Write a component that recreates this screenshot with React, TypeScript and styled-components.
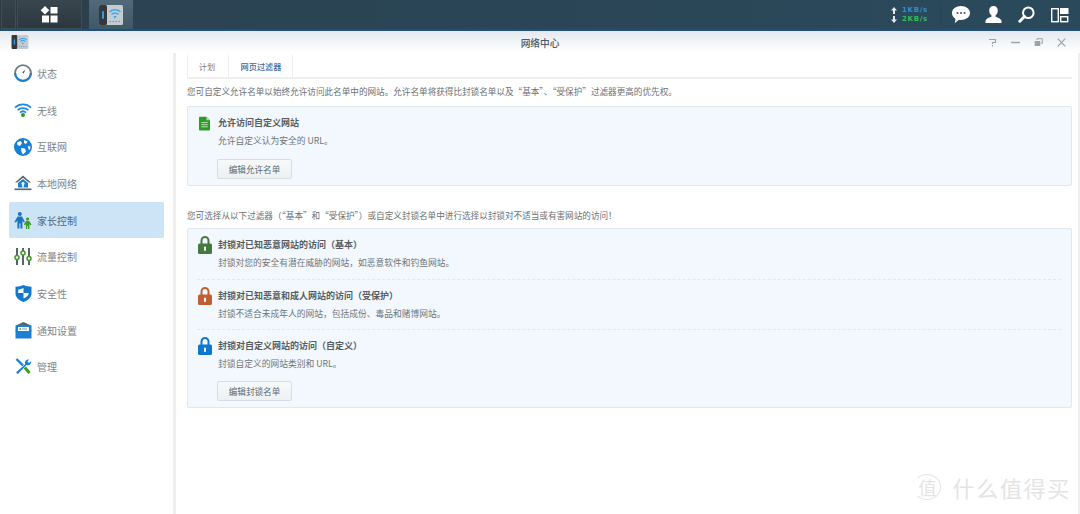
import React from 'react';
import styled, { createGlobalStyle } from 'styled-components';

const Global = createGlobalStyle`
  html, body {
    margin: 0;
    height: 100%;
    overflow: hidden;
    background: #fff;
    font-family: "Noto Sans CJK SC", "Noto Sans", sans-serif;
  }
  * { box-sizing: border-box; }
`;

const Page = styled.div`
  position: relative;
  width: 1080px;
  height: 514px;
  display: flex;
  flex-direction: column;
  overflow: hidden;
`;

const Taskbar = styled.header`
  height: 31px;
  flex: none;
  display: flex;
  align-items: stretch;
  padding-left: 1px;
  background: linear-gradient(90deg, #2c3941 0%, #2b4352 12%, #2a4a5c 100%);
  border-bottom: 2px solid #1f4f7d;
`;

const MainMenu = styled.div`
  width: 15px;
  border: 1px solid #3f4d55;
  border-top: 0;
  background: linear-gradient(180deg, #36434b, #2c3940);
`;

const HomeButton = styled.div`
  width: 65px;
  margin-right: 7px;
  margin-left: 1px;
  padding-right: 2px;
  display: flex;
  align-items: center;
  justify-content: center;
  background: linear-gradient(180deg, #39464e, #2b383f);
  border: 1px solid #3f4d55;
  border-top: 0;
`;

const AppButton = styled.div`
  width: 44px;
  display: flex;
  align-items: center;
  justify-content: center;
  background: linear-gradient(180deg, #51697a, #3f5866);
`;

const Spacer = styled.div`
  flex: 1;
`;

const Rates = styled.div`
  width: 50px;
  margin: 4px 8px 4px 0;
  display: flex;
  flex-direction: column;
  justify-content: center;
  border-right: 1px solid #2b4252;
`;

const Rate = styled.div<{ $color: string }>`
  display: flex;
  align-items: center;
  gap: 5px;
  height: 9px;
  font: bold 7px/9px "DejaVu Sans", sans-serif;
  letter-spacing: 0.7px;
  color: ${p => p.$color};
`;

const TrayGroup = styled.div`
  display: flex;
  align-items: center;
  gap: 10px;
  margin-right: 9px;
`;

const TrayIcon = styled.span`
  width: 23px;
  height: 20px;
  display: flex;
  align-items: center;
  justify-content: center;
`;

const TitleBar = styled.div`
  position: relative;
  flex: none;
  height: 22px;
  display: flex;
  align-items: center;
  justify-content: space-between;
  padding: 0 14px 0 11px;
  background: linear-gradient(180deg, #e4e9ee 0%, #f9fafb 75%, #fff 100%);
`;

const Title = styled.div`
  position: absolute;
  left: 0;
  right: 0;
  top: 3px;
  text-align: center;
  font-size: 9.7px;
  line-height: 18px;
  font-weight: 500;
  color: #4a5a6a;
`;

const WindowButtons = styled.div`
  display: flex;
  align-items: center;
  gap: 14px;
`;

const Body = styled.div`
  flex: 1;
  display: flex;
  min-height: 0;
`;

const Sidebar = styled.nav`
  width: 176px;
  flex: none;
  padding: 2px 0 0 9px;
  border-right: 3px solid #eeeeee;
`;

const NavItem = styled.div<{ $active?: boolean }>`
  width: 155px;
  height: 36.7px;
  display: flex;
  align-items: center;
  gap: 5px;
  padding-left: 5px;
  border-radius: 2px;
  font-size: 10px;
  color: ${p => (p.$active ? '#51667c' : '#7e8489')};
  background: ${p => (p.$active ? '#cde3f6' : 'transparent')};
`;

const NavIcon = styled.span`
  width: 18px;
  height: 18px;
  flex: none;
  display: flex;
  align-items: center;
  justify-content: center;
`;

const Content = styled.main`
  flex: 1;
  min-width: 0;
  padding: 2px 6px 0 11px;
  border-right: 2px solid #f0f0f0;
`;

const Tabs = styled.div`
  display: flex;
  height: 24px;
  border-bottom: 2px solid #eeeeee;
`;

const Tab = styled.div<{ $active?: boolean }>`
  height: 22px;
  width: ${p => (p.$active ? '64px' : '41px')};
  display: flex;
  align-items: center;
  justify-content: center;
  padding-left: ${p => (p.$active ? '1px' : '0')};
  padding-right: ${p => (p.$active ? '0' : '2px')};
  font-size: 8.2px;
  color: ${p => (p.$active ? '#3f6a9c' : '#7d8286')};
  font-weight: ${p => (p.$active ? 500 : 400)};
  border-left: 1px solid #eeeeee;
  &:last-child {
    border-right: 1px solid #eeeeee;
    width: 65px;
  }
`;

const Intro = styled.p<{ $top: number }>`
  margin: ${p => p.$top}px 0 0;
  height: 14px;
  font-size: 8.6px;
  line-height: 14px;
  color: #6b7074;
  white-space: nowrap;
`;

const Card = styled.section<{ $top: number }>`
  margin-top: ${p => p.$top}px;
  padding: 0 10px 6px 9px;
  background: #f2f8fd;
  border: 1px solid #dfe8f0;
  border-radius: 2px;
`;

const Row = styled.div<{ $divider?: boolean }>`
  display: flex;
  gap: 6px;
  padding-top: 9px;
  height: 50px;
  border-top: ${p => (p.$divider ? '1px dashed #e2e8ee' : '0')};
`;

const RowIcon = styled.span`
  width: 15px;
  height: 18px;
  margin-top: -2px;
  flex: none;
  display: flex;
  align-items: center;
  justify-content: center;
`;

const RowText = styled.div`
  display: flex;
  flex-direction: column;
  gap: 4px;
`;

const RowTitle = styled.div`
  font-size: 9px;
  line-height: 14px;
  font-weight: 700;
  color: #565c61;
  white-space: nowrap;
`;

const RowDesc = styled.div`
  font-size: 8.75px;
  line-height: 14px;
  color: #6f767b;
  white-space: nowrap;
`;

const Button = styled.div`
  width: 75px;
  height: 20px;
  margin: 2px 0 0 20px;
  display: flex;
  align-items: center;
  justify-content: center;
  font-size: 8.6px;
  color: #5d6a72;
  background: linear-gradient(180deg, #f7f9fa, #eef1f3);
  border: 1px solid #d8dde1;
  border-radius: 2px;
`;

const Watermark = styled.div`
  position: absolute;
  right: 9px;
  bottom: 13px;
  display: flex;
  align-items: center;
  gap: 11px;
  color: #e4e4e4;
  font-size: 22px;
  line-height: 28px;
  letter-spacing: 1.7px;
`;

const WatermarkBadge = styled.span`
  width: 28px;
  height: 26px;
  display: flex;
  align-items: center;
  justify-content: center;
  font-size: 18px;
  letter-spacing: 0;
  border: 1.5px solid #e4e4e4;
  border-left-color: transparent;
  border-radius: 50%;
`;

const AppGlyph: React.FC<{ w: number; h: number }> = ({ w, h }) => (
  <svg width={w} height={h} viewBox="0 0 24 20">
    <rect x="0" y="0" width="24" height="20" rx="1.5" fill="#c3ccd1" />
    <rect x="0" y="0" width="8" height="20" rx="1.5" fill="#33393d" />
    <rect x="3" y="6" width="2" height="8" rx="1" fill="#2f9bf0" />
    <path d="M10.500 7a8 8 0 0 1 11 0M12.500 9.500a5 5 0 0 1 7 0" fill="none" stroke="#3ea6ee" strokeWidth="1.6" />
    <path d="M14.300 11.500a2.500 2.500 0 0 1 3.400 0L16 13.500z" fill="#3ea6ee" />
    <path d="M10.500 16.500h1.600M13.500 16.500h1.600M16.500 16.500h1.600M19.500 16.500h1.600" stroke="#5a9cc8" strokeWidth="1.2" />
  </svg>
);

const GaugeIcon = () => (
  <svg width="18" height="18" viewBox="0 0 18 18">
    <circle cx="9" cy="9" r="7.9" fill="#fff" stroke="#6e7c86" strokeWidth="1.8" />
    <path d="M1.100 9a7.900 7.900 0 0 0 15.800 0" fill="none" stroke="#1a80d4" strokeWidth="2.200" />
    <path d="M11.500 5.500 8.200 8.200 9.600 9.800z" fill="#56626b" />
  </svg>
);

const WifiIcon = () => (
  <svg width="18" height="14" viewBox="0 0 18 14">
    <path d="M1 4.600a11.500 11.500 0 0 1 16 0M3.600 7.200a8 8 0 0 1 10.800 0M6 9.600a4.500 4.500 0 0 1 6 0" fill="none" stroke="#1f8adc" strokeWidth="1.7" />
    <circle cx="9" cy="12" r="2" fill="#2f9a1d" />
  </svg>
);

const GlobeIcon = () => (
  <svg width="18" height="18" viewBox="0 0 18 18">
    <circle cx="9" cy="9" r="9" fill="#1480d6" />
    <path d="M3 4.500 6.500 3 8 5 6 8 3.500 7zM10 2l3.500 1.500L12 6l-2-1zM7 10l4 .5 1 3-3 3-1.500-2.500zM14 8l2.500.5-.6 3.500-1.600-1z" fill="#fff" />
  </svg>
);

const HouseIcon = () => (
  <svg width="18" height="17" viewBox="0 0 18 17">
    <path d="M9 .5 17 7.500h-2.200L9 2.800 3.200 7.500H1z" fill="#56646f" />
    <path d="M9 4 14 8v4.500H4V8z" fill="#1a80d4" />
    <circle cx="9" cy="8.500" r="1.600" fill="#fff" />
    <rect x="8.200" y="10" width="1.600" height="2.500" fill="#fff" />
    <rect x="0.500" y="13.500" width="17" height="1.600" fill="#56646f" />
  </svg>
);

const FamilyIcon = () => (
  <svg width="18" height="17" viewBox="0 0 18 17">
    <circle cx="5.800" cy="2" r="2" fill="#1a74c4" />
    <path d="M3.600 4.500h4.400L11 10 9.600 10.600 8.400 8.400v8H6.400v-5h-1v5H3.400V8.400L2 10.600.4 10z" fill="#1a74c4" />
    <circle cx="13.600" cy="7" r="1.600" fill="#3d9b24" />
    <path d="M12 9h3.200l2.300 3.600-1.200.6-.9-1.300V17H14v-3h-.8v3h-1.300v-5.100l-.9 1.300-1.200-.6z" fill="#3d9b24" />
  </svg>
);

const SlidersIcon = () => (
  <svg width="18" height="17" viewBox="0 0 18 17">
    <path d="M3 0v17M9 0v17M15 0v17" stroke="#56646f" strokeWidth="2" />
    <circle cx="3" cy="9.500" r="2" fill="#fff" stroke="#3d9b24" strokeWidth="1.500" />
    <circle cx="9" cy="5" r="2" fill="#fff" stroke="#3d9b24" strokeWidth="1.500" />
    <circle cx="15" cy="10.500" r="2" fill="#fff" stroke="#3d9b24" strokeWidth="1.500" />
  </svg>
);

const ShieldIcon = () => (
  <svg width="17" height="17" viewBox="0 0 17 17">
    <path d="M8.500 0c2.500 1.300 5 1.700 8 1.700v6.500c0 4-3 7-8 8.800-5-1.800-8-4.800-8-8.800V1.700c3 0 5.500-.4 8-1.700z" fill="#1278d0" />
    <path d="M8.500 3v5H3.200V4.400c2 0 3.600-.5 5.300-1.400zM8.500 8h5.300c-.2 2.600-2.300 4.200-5.300 5.500z" fill="#fff" />
  </svg>
);

const MailboxIcon = () => (
  <svg width="17" height="17" viewBox="0 0 17 17">
    <path d="M8.500 0 15 3H2z" fill="#56646f" />
    <rect x="0.500" y="3" width="16" height="6.500" rx="1" fill="#1a80d4" />
    <rect x="0.500" y="8" width="16" height="8.500" rx="0.500" fill="#1a80d4" />
    <rect x="3" y="5" width="11" height="4" fill="#fff" />
    <path d="M4.500 7h1.500" stroke="#3d9b24" strokeWidth="1.600" />
    <path d="M7 7h5" stroke="#7f99ac" strokeWidth="1" />
  </svg>
);

const ToolsIcon = () => (
  <svg width="17" height="17" viewBox="0 0 17 17">
    <path d="M1.500 1 8 7.500" stroke="#1a80d4" strokeWidth="2.400" />
    <path d="M14 1.500a3.400 3.400 0 0 0-3.800 4.800L1 14.500 2.800 16l8.800-9a3.400 3.400 0 0 0 4.600-3.800L14 5l-1.500-1.500z" fill="#1a80d4" />
    <path d="M9.800 9.500 14.500 15" stroke="#3d9b24" strokeWidth="3" />
  </svg>
);

const DocIcon = () => (
  <svg width="11" height="15" viewBox="0 0 12 15">
    <path d="M1 0h7l4 4v10a1 1 0 0 1-1 1H1a1 1 0 0 1-1-1V1a1 1 0 0 1 1-1z" fill="#2f9a2a" />
    <path d="M8 0l4 4H8z" fill="#a6d79e" />
    <path d="M2.500 6.500h7M2.500 8.800h7M2.500 11.100h7" stroke="#c9e8c4" strokeWidth="1" />
  </svg>
);

const LockIcon: React.FC<{ color: string }> = ({ color }) => (
  <svg width="14" height="18" viewBox="0 0 14 18">
    <path d="M3.500 8V4.500a3.500 3.500 0 0 1 7 0V8" fill="none" stroke={color} strokeWidth="2" />
    <rect x="0" y="7.500" width="14" height="10.500" rx="1.500" fill={color} />
    <rect x="6" y="10.500" width="2" height="4.500" rx="1" fill="#fff" />
  </svg>
);

const navItems: { label: string; icon: React.ReactNode; active?: boolean }[] = [
  { label: '状态', icon: <GaugeIcon /> },
  { label: '无线', icon: <WifiIcon /> },
  { label: '互联网', icon: <GlobeIcon /> },
  { label: '本地网络', icon: <HouseIcon /> },
  { label: '家长控制', icon: <FamilyIcon />, active: true },
  { label: '流量控制', icon: <SlidersIcon /> },
  { label: '安全性', icon: <ShieldIcon /> },
  { label: '通知设置', icon: <MailboxIcon /> },
  { label: '管理', icon: <ToolsIcon /> },
];

const App: React.FC = () => (
  <Page>
    <Global />
    <Taskbar>
      <MainMenu />
      <HomeButton>
        <svg width="18" height="17" viewBox="0 0 18 17">
          <path d="M5 0l4.300 4.200L5 8.400.7 4.200z" fill="#fff" />
          <rect x="10.500" y="1" width="7" height="6.500" fill="#fff" />
          <rect x="2" y="9.500" width="7" height="7" fill="#fff" />
          <rect x="10.500" y="9.500" width="7" height="7" fill="#fff" />
        </svg>
      </HomeButton>
      <AppButton>
        <AppGlyph w={24} h={20} />
      </AppButton>
      <Spacer />
      <Rates>
        <Rate $color="#2f8fd0">
          <svg width="6" height="7" viewBox="0 0 6 7"><path d="M3 0l3 3.500H4V7H2V3.500H0z" fill="#e4e8ea" /></svg>
          1KB/s
        </Rate>
        <Rate $color="#2fbf58">
          <svg width="6" height="7" viewBox="0 0 6 7"><path d="M3 7 0 3.500h2V0h2v3.500h2z" fill="#e4e8ea" /></svg>
          2KB/s
        </Rate>
      </Rates>
      <TrayGroup>
        <TrayIcon>
          <svg width="18" height="17" viewBox="0 0 18 17">
            <path d="M9 0c5 0 9 3 9 7s-4 7-9 7c-.8 0-1.500 0-2.200-.2C5.500 15 4 16.500 2.500 17c.7-1.200 1-2.800.8-4.300C1.200 11.400 0 9.300 0 7c0-4 4-7 9-7z" fill="#fff" />
            <circle cx="5.500" cy="7" r="1.100" fill="#4a6070" />
            <circle cx="9" cy="7" r="1.100" fill="#4a6070" />
            <circle cx="12.500" cy="7" r="1.100" fill="#4a6070" />
          </svg>
        </TrayIcon>
        <TrayIcon>
          <svg width="17" height="17" viewBox="0 0 17 17">
            <path d="M8.500 0c2.700 0 4.300 2 4.300 4.700 0 2-1 3.700-2.300 4.700v1.300c2.500.8 5.500 1.800 6 4.300v2H.5v-2c.5-2.500 3.500-3.500 6-4.300V9.400C5.200 8.400 4.200 6.700 4.200 4.700 4.200 2 5.800 0 8.500 0z" fill="#fff" />
          </svg>
        </TrayIcon>
        <TrayIcon>
          <svg width="17" height="17" viewBox="0 0 17 17">
            <circle cx="10.300" cy="6.700" r="5.300" fill="none" stroke="#fff" strokeWidth="2" />
            <path d="M6.500 10.500 1.800 15.200" stroke="#fff" strokeWidth="3" strokeLinecap="round" />
          </svg>
        </TrayIcon>
        <TrayIcon>
          <svg width="18" height="16" viewBox="0 0 18 16">
            <rect x="0.700" y="1.700" width="6.600" height="13" fill="none" stroke="#fff" strokeWidth="1.400" />
            <rect x="9" y="1" width="8.500" height="6" fill="#fff" />
            <rect x="9.700" y="9.700" width="7" height="5" fill="none" stroke="#fff" strokeWidth="1.400" />
          </svg>
        </TrayIcon>
      </TrayGroup>
    </Taskbar>
    <TitleBar>
      <AppGlyph w={18} h={14} />
      <Title>网络中心</Title>
      <WindowButtons>
        <svg width="9" height="9" viewBox="0 0 9 9">
          <path d="M1 1.500h6.500v3H4.500v1.500M4.500 7v1.500" fill="none" stroke="#9aa3aa" strokeWidth="1.200" />
        </svg>
        <svg width="9" height="9" viewBox="0 0 9 9"><path d="M0 4.500h9" stroke="#9aa3aa" strokeWidth="1.400" /></svg>
        <svg width="9" height="9" viewBox="0 0 9 9">
          <path d="M3 2V.7h5.300v4.600H7" fill="none" stroke="#9aa3aa" strokeWidth="1" />
          <rect x="0.700" y="3" width="5.600" height="5" fill="#9aa3aa" />
        </svg>
        <svg width="9" height="9" viewBox="0 0 9 9"><path d="M.7.700l7.600 7.600M8.300.700.7 8.300" stroke="#9aa3aa" strokeWidth="1.200" /></svg>
      </WindowButtons>
    </TitleBar>
    <Body>
      <Sidebar>
        {navItems.map(item => (
          <NavItem key={item.label} $active={item.active}>
            <NavIcon>{item.icon}</NavIcon>
            {item.label}
          </NavItem>
        ))}
      </Sidebar>
      <Content>
        <Tabs>
          <Tab>计划</Tab>
          <Tab $active>网页过滤器</Tab>
        </Tabs>
        <Intro $top={5}>您可自定义允许名单以始终允许访问此名单中的网站。允许名单将获得比封锁名单以及“基本”、“受保护”过滤器更高的优先权。</Intro>
        <Card $top={8}>
          <Row>
            <RowIcon><DocIcon /></RowIcon>
            <RowText>
              <RowTitle>允许访问自定义网站</RowTitle>
              <RowDesc>允许自定义认为安全的 URL。</RowDesc>
            </RowText>
          </Row>
          <Button>编辑允许名单</Button>
        </Card>
        <Intro $top={22}>您可选择从以下过滤器（“基本”和“受保护”）或自定义封锁名单中进行选择以封锁对不适当或有害网站的访问！</Intro>
        <Card $top={6}>
          <Row>
            <RowIcon><LockIcon color="#44793f" /></RowIcon>
            <RowText>
              <RowTitle>封锁对已知恶意网站的访问（基本）</RowTitle>
              <RowDesc>封锁对您的安全有潜在威胁的网站，如恶意软件和钓鱼网站。</RowDesc>
            </RowText>
          </Row>
          <Row $divider>
            <RowIcon><LockIcon color="#bf5f33" /></RowIcon>
            <RowText>
              <RowTitle>封锁对已知恶意和成人网站的访问（受保护）</RowTitle>
              <RowDesc>封锁不适合未成年人的网站，包括成份、毒品和赌博网站。</RowDesc>
            </RowText>
          </Row>
          <Row $divider>
            <RowIcon><LockIcon color="#0f77cc" /></RowIcon>
            <RowText>
              <RowTitle>封锁对自定义网站的访问（自定义）</RowTitle>
              <RowDesc>封锁自定义的网站类别和 URL。</RowDesc>
            </RowText>
          </Row>
          <Button>编辑封锁名单</Button>
        </Card>
      </Content>
    </Body>
    <Watermark>
      <WatermarkBadge>值</WatermarkBadge>
      什么值得买
    </Watermark>
  </Page>
);

export default App;
